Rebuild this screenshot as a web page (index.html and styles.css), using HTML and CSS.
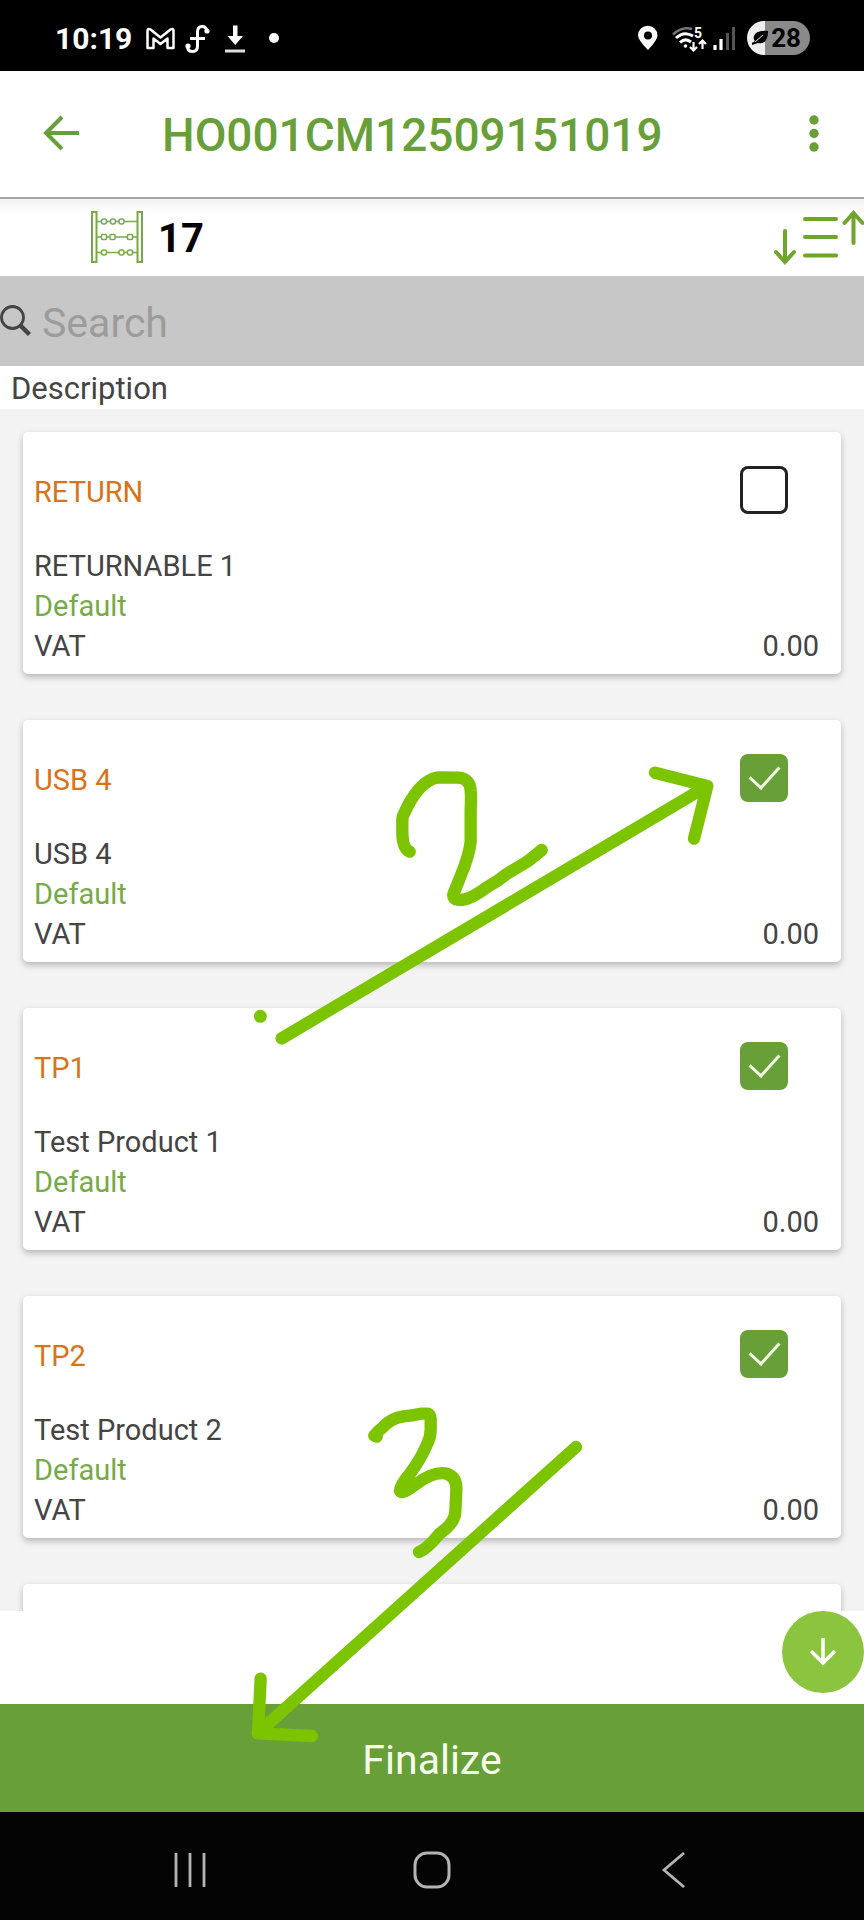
FILE: index.html
```html
<!DOCTYPE html>
<html lang="en">
<head>
<meta charset="utf-8">
<meta name="viewport" content="width=device-width, initial-scale=1">
<title>HO001CM12509151019</title>
<link rel="stylesheet" href="styles.css">
</head>
<body>
<div class="screen">
  <div class="status-bar">
    <span class="clock">10:19</span>
    <svg class="notifications" viewBox="147 20 134 34" width="134" height="34" fill="none" stroke="#fff" aria-hidden="true">
      <path d="M148.500 47V29.500Q149 27 151.500 28.500L161.500 36.500 171.500 28.500Q174 27 174.500 29.500V47H168.500V37.500L161.500 43 154.500 37.500V47Z" stroke-width="2.500" stroke-linejoin="round"/>
      <path d="M208 30Q207 25 202.500 25.500Q198.500 26 198.500 31V45Q198.500 50.500 193.500 50.500Q189 50.500 188.500 46M191 37.500H206" stroke-width="3"/>
      <circle cx="208" cy="30" r="2.600" fill="#fff" stroke="none"/>
      <circle cx="189" cy="45" r="2.600" fill="#fff" stroke="none"/>
      <path d="M234 24.500H238.500V35H244L236.200 44 228.500 35H234Z" fill="#fff" stroke="none"/>
      <path d="M226 50H246" stroke="#ddd" stroke-width="3"/>
      <circle cx="275" cy="37" r="5" fill="#fff" stroke="none"/>
    </svg>
    <svg class="signals" viewBox="636 20 102 34" width="102" height="34" fill="none" stroke="#fff" aria-hidden="true">
      <path fill-rule="evenodd" d="M648 49Q638 39 638 34.500A9.700 9.700 0 0 1 657.500 34.500Q657.500 39 648 49ZM648 30.500A4 4 0 1 0 648 38.500A4 4 0 1 0 648 30.500Z" fill="#fff" stroke="none"/>
      <path d="M673 33.500Q682 25 692 28" stroke="#777" stroke-width="2.500"/>
      <path d="M676 37Q684 29.500 693 35M680 41.500Q685.500 36.500 691 41" stroke-width="3"/>
      <circle cx="685.500" cy="45" r="1.800" fill="#fff" stroke="none"/>
      <text x="694" y="37" class="band">5</text>
      <path d="M693.500 41V49M690 46L693.500 49.500 697 46M702.500 48V40M699 43L702.500 39.500 706 43" stroke-width="2.200"/>
      <path d="M715 44V49M721 38V49" stroke-width="3.200"/>
      <path d="M727.500 32V49M733.500 26V49" stroke="#555" stroke-width="3"/>
    </svg>
    <span class="battery">
      <svg viewBox="0 0 18 18" width="18" height="18" aria-hidden="true"><path d="M17 2Q5 1 3 7Q2 10 4 12L1 14V16L7 14Q13 15 15 11Q17 8 17 2Z" fill="#000"/><path d="M4 13L12 6" stroke="#eee" stroke-width="1"/></svg>
      <span>28</span>
    </span>
  </div>

  <header class="app-bar">
    <button class="icon-button" type="button" aria-label="Back">
      <svg viewBox="0 0 42 42" width="42" height="42" fill="none" stroke="currentColor" stroke-width="4" aria-hidden="true"><path d="M39 20H6M22 4L6 20 22 36"/></svg>
    </button>
    <h1 class="title">HO001CM12509151019</h1>
    <button class="icon-button" type="button" aria-label="More options">
      <svg viewBox="0 0 20 42" width="20" height="42" fill="currentColor" aria-hidden="true"><circle cx="10" cy="7" r="4.700"/><circle cx="10" cy="20.500" r="4.700"/><circle cx="10" cy="34" r="4.700"/></svg>
    </button>
  </header>

  <div class="summary">
    <svg viewBox="0 0 52 52" width="52" height="52" fill="none" stroke="#76aa45" stroke-width="1.500" aria-hidden="true">
      <path d="M1 1H5.500V51H1ZM46.500 1H51V51H46.500Z" stroke-width="2"/>
      <path d="M6 10.500H10M16 10.500H19M25 10.500H28M33 10.500H46M6 26H10M16 26H18.500M24 26H36M42 26H46M6 41.500H10M16 41.500H28M33 41.500H36M42 41.500H46"/>
      <rect x="10.500" y="8" width="5" height="5" rx="2"/><rect x="19.500" y="8" width="5" height="5" rx="2"/><rect x="28" y="8" width="5" height="5" rx="2"/>
      <rect x="10.500" y="23.500" width="5" height="5" rx="1"/><rect x="19" y="23.500" width="5" height="5" rx="1"/><rect x="36.500" y="23.500" width="5" height="5" rx="1"/>
      <rect x="10.500" y="39" width="5" height="5" rx="2"/><rect x="28" y="39" width="5" height="5" rx="2"/><rect x="36.500" y="39" width="5" height="5" rx="2"/>
    </svg>
    <span class="count">17</span>
    <button class="icon-button sort" type="button" aria-label="Sort">
      <svg viewBox="0 0 90 56" width="90" height="56" fill="none" stroke="currentColor" stroke-width="4" stroke-linecap="round" aria-hidden="true"><path d="M11 22V53M2 43L11 53 20 43M31 10H62M31 28H62M31 46.500H62M79.500 34V4M70.500 14L79.500 4 88.500 14"/></svg>
    </button>
  </div>

  <label class="search">
    <svg viewBox="0 0 32 32" width="32" height="32" fill="none" stroke="#444" aria-hidden="true"><circle cx="12.500" cy="12.500" r="11" stroke-width="2.800"/><path d="M20 20L29.500 29.500" stroke-width="4.500"/></svg>
    <input class="search-input" type="search" placeholder="Search" aria-label="Search">
  </label>

  <p class="column-label">Description</p>

  <main class="list">
    <article class="card">
      <div class="card-head"><label class="code" for="item-1">RETURN</label><input class="check" type="checkbox" id="item-1"></div>
      <p>RETURNABLE 1</p>
      <p class="variant">Default</p>
      <p class="tax"><span>VAT</span><span>0.00</span></p>
    </article>
    <article class="card">
      <div class="card-head"><label class="code" for="item-2">USB 4</label><input class="check" type="checkbox" id="item-2" checked></div>
      <p>USB 4</p>
      <p class="variant">Default</p>
      <p class="tax"><span>VAT</span><span>0.00</span></p>
    </article>
    <article class="card">
      <div class="card-head"><label class="code" for="item-3">TP1</label><input class="check" type="checkbox" id="item-3" checked></div>
      <p>Test Product 1</p>
      <p class="variant">Default</p>
      <p class="tax"><span>VAT</span><span>0.00</span></p>
    </article>
    <article class="card">
      <div class="card-head"><label class="code" for="item-4">TP2</label><input class="check" type="checkbox" id="item-4" checked></div>
      <p>Test Product 2</p>
      <p class="variant">Default</p>
      <p class="tax"><span>VAT</span><span>0.00</span></p>
    </article>
    <article class="card card-next"></article>
  </main>

  <div class="scroll-row">
    <button class="scroll-down" type="button" aria-label="Scroll down">
      <svg viewBox="0 0 30 30" width="30" height="30" fill="none" stroke="#fff" stroke-width="3.500" aria-hidden="true"><path d="M15 1V26M3 14L15 26 27 14"/></svg>
    </button>
  </div>

  <button class="finalize" type="button">Finalize</button>

  <nav class="system-nav" aria-label="System">
    <button class="nav-button" type="button" aria-label="Recent apps">
      <svg viewBox="0 0 38 38" width="38" height="38" fill="none" stroke="currentColor" stroke-width="2.800" aria-hidden="true"><path d="M5 2V36M19 2V36M33 2V36"/></svg>
    </button>
    <button class="nav-button" type="button" aria-label="Home">
      <svg viewBox="0 0 38 38" width="38" height="38" fill="none" stroke="currentColor" stroke-width="3" aria-hidden="true"><rect x="2" y="2" width="34" height="34" rx="12"/></svg>
    </button>
    <button class="nav-button" type="button" aria-label="Back">
      <svg viewBox="0 0 38 38" width="38" height="38" fill="none" stroke="currentColor" stroke-width="2.800" aria-hidden="true"><path d="M29 2L9 19 29 36"/></svg>
    </button>
  </nav>

  <svg class="markup" viewBox="0 0 864 1920" aria-hidden="true">
    <g transform="translate(240 700) scale(.33333)">
      <circle cx="61" cy="949" r="19.500" class="dot"/>
      <path d="M125 1015L1402 258M1245 218L1402 258 1362 416"/>
      <path d="M509 455Q487 445 487 395V360Q487 350 495 335Q530 258 575 238Q583 233 600 232L655 233Q691 236 692 272Q694 290 692 330V425Q688 465 662 528L641 580Q635 600 660 600Q690 600 740 562Q775 543 800 522L855 489Q870 480 905 450"/>
    </g>
    <g transform="translate(230 1380) scale(.33333)">
      <path d="M1038 201L83 1060M92 896L84 1060 246 1068"/>
      <path d="M440 170L433 167Q444 153 460 140Q485 114 520 109Q545 107 572 101H590Q603 102 602 125V150Q602 172 590 195Q573 236 542 278Q508 318 510 332Q513 347 560 311Q610 275 645 280Q681 288 679 330L676 395Q675 420 650 444L627 463Q590 508 567 516"/>
    </g>
  </svg>
</div>
</body>
</html>
```
FILE: styles.css
```css
* {
  box-sizing: border-box;
}

body {
  margin: 0;
  font-family: Roboto, "Liberation Sans", sans-serif;
  font-size: 29px;
  line-height: 40px;
  color: #444;
  background: #fff;
}

button {
  padding: 0;
  border: 0;
  background: none;
  font: inherit;
  color: inherit;
}

svg {
  display: block;
  flex: none;
}

p,
h1 {
  margin: 0;
}

.screen {
  position: relative;
  display: flex;
  flex-direction: column;
  height: 100vh;
  overflow: hidden;
}

.status-bar {
  display: flex;
  flex: none;
  align-items: center;
  min-height: 71px;
  padding: 4px 54px 0 55px;
  background: #000;
  color: #fff;
}

.clock {
  padding-top: 2px;
  font-size: 30px;
  font-weight: 700;
}

.notifications {
  margin-left: 14px;
}

.signals {
  margin-left: auto;
}

.band {
  fill: #fff;
  stroke: none;
  font-size: 14px;
  font-weight: 700;
}

.battery {
  display: flex;
  align-items: center;
  gap: 2px;
  margin-left: 9px;
  padding: 0 9px 0 4px;
  border-radius: 17px;
  background: linear-gradient(90deg, #eee 18px, #8a8a8a 18px);
  color: #000;
  font-size: 26px;
  font-weight: 700;
  line-height: 34px;
}

.app-bar {
  display: flex;
  flex: none;
  align-items: center;
  min-height: 128px;
  padding: 0 40px;
  border-bottom: 2px solid #a6a8a6;
  color: #689f38;
}

.title {
  flex: 1;
  padding: 2px 0 0 80px;
  font-size: 46px;
  font-weight: 500;
  line-height: 56px;
}

.summary {
  display: flex;
  flex: none;
  align-items: center;
  min-height: 77px;
  padding: 0 0 2px 91px;
  background: linear-gradient(#f2f2f2, #fff 16px);
}

.count {
  padding: 4px 0 0 15px;
  font-size: 40px;
  font-weight: 700;
  color: #000;
}

.sort {
  margin-left: auto;
  color: #6fa52b;
}

.search {
  display: flex;
  flex: none;
  align-items: center;
  gap: 10px;
  min-height: 90px;
  background: #c7c7c7;
}

.search-input {
  flex: 1;
  min-width: 0;
  padding: 3px 0 0;
  border: 0;
  outline: 0;
  background: none;
  font: inherit;
  font-size: 41px;
  line-height: 48px;
  color: #444;
}

.search-input::placeholder {
  color: #9c9c9c;
}

.column-label {
  flex: none;
  padding: 2px 11px 0;
  font-size: 31px;
  line-height: 41px;
}

.list {
  display: flex;
  flex: 1 1 0;
  flex-direction: column;
  gap: 46px;
  min-height: 0;
  padding: 23px 23px 0;
  overflow: hidden;
  background: #f3f3f3;
}

.card {
  flex: none;
  padding: 34px 22px 8px 11px;
  border-radius: 5px;
  background: #fff;
  box-shadow: 0 3px 6px rgba(0, 0, 0, 0.25);
}

.card-next {
  min-height: 242px;
}

.card-head {
  display: flex;
  align-items: center;
  justify-content: space-between;
  padding-right: 31px;
  margin-bottom: 32px;
}

.code {
  padding-top: 3px;
  color: #d9731a;
}

.check {
  appearance: none;
  width: 48px;
  height: 48px;
  margin: 0;
  border: 3px solid #222;
  border-radius: 8px;
  background: #fff;
}

.check:checked {
  border-color: #689f38;
  background: #689f38;
  display: grid;
  place-items: center;
}

.check:checked::before {
  content: "";
  width: 14px;
  height: 26px;
  margin-bottom: 10px;
  border: solid #f0ffe0;
  border-width: 0 3px 3px 0;
  transform: rotate(42deg);
}

.variant {
  color: #76aa48;
}

.tax {
  display: flex;
  justify-content: space-between;
}

.scroll-row {
  display: flex;
  flex: none;
  justify-content: flex-end;
  padding-bottom: 11px;
}

.scroll-down {
  display: grid;
  place-items: center;
  width: 82px;
  height: 82px;
  border-radius: 50%;
  background: #8bc540;
}

.finalize {
  flex: none;
  min-height: 108px;
  padding-top: 4px;
  background: #689f38;
  color: #f6ffee;
  font-size: 41px;
  line-height: 48px;
}

.system-nav {
  display: flex;
  flex: none;
  justify-content: space-between;
  min-height: 108px;
  padding: 8px 171px 0;
  background: #040404;
  color: #b4b4b4;
}

.nav-button {
  display: grid;
  place-items: center;
}

.markup {
  position: absolute;
  inset: 0;
  width: 100%;
  height: 100%;
  pointer-events: none;
  fill: none;
  stroke: #7dc400;
  stroke-width: 37px;
  stroke-linecap: round;
  stroke-linejoin: round;
}

.dot {
  fill: #7dc400;
  stroke: none;
}
```
